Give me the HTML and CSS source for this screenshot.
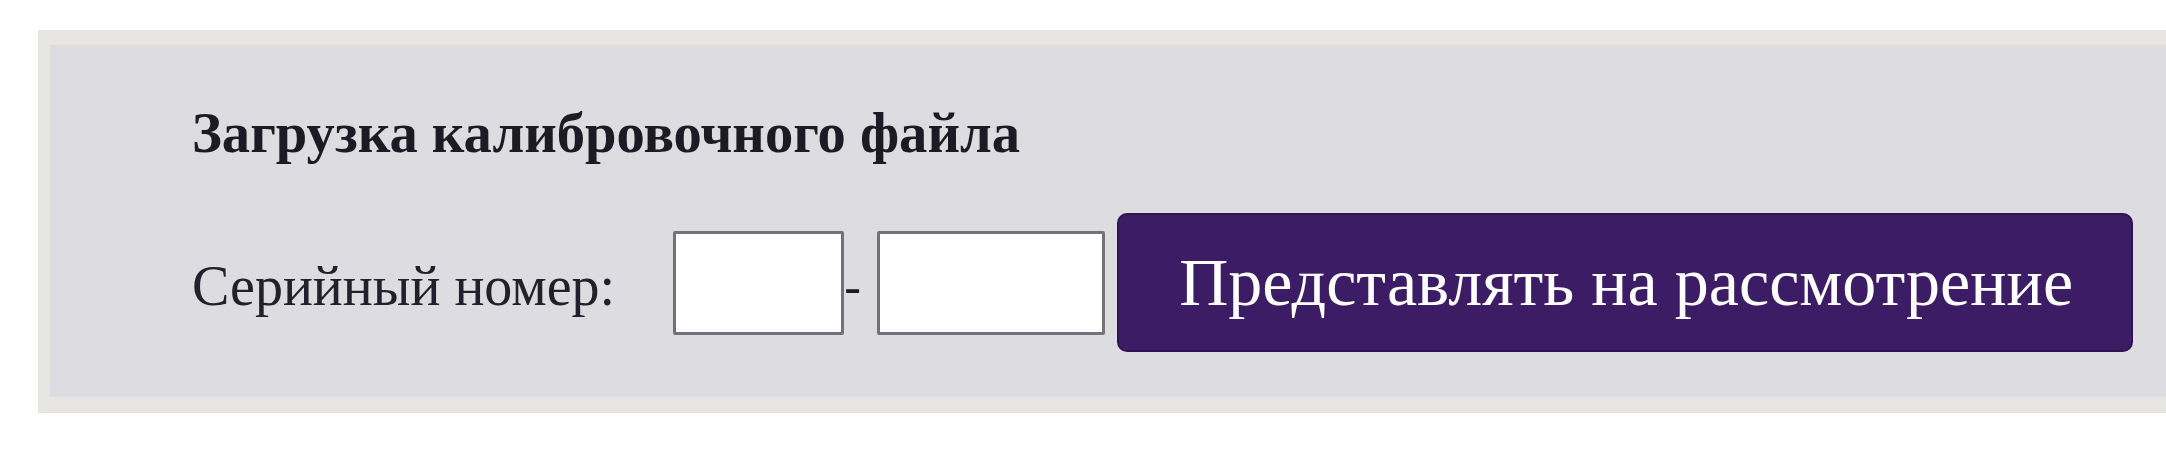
FILE: index.html
```html
<!DOCTYPE html>
<html lang="ru">
<head>
<meta charset="utf-8">
<title>Загрузка калибровочного файла</title>
<link rel="stylesheet" href="styles.css">
</head>
<body>
<div class="frame">
  <div class="panel">
    <h2 class="title">Загрузка калибровочного файла</h2>
    <form class="row">
      <label class="label" for="sn1">Серийный номер:</label>
      <input class="field field-a" id="sn1" type="text">
      <span class="dash">-</span>
      <input class="field field-b" id="sn2" type="text">
      <button class="submit" type="button">Представлять на рассмотрение</button>
    </form>
  </div>
</div>
</body>
</html>
```

FILE: styles.css
```css
html, body {
  margin: 0;
  padding: 0;
  background: #ffffff;
  overflow: hidden;
}

body {
  font-family: "Liberation Serif", "Times New Roman", serif;
  color: #1d1b26;
}

.frame {
  margin: 30px 0 0 38px;
  padding: 15px 0 16px 12px;
  background: #e7e6e3;
}

.panel {
  background: #dddce0;
  height: 352px;
  box-sizing: border-box;
  padding: 59px 0 0 142px;
}

.title {
  margin: 0;
  font-size: 56.6px;
  line-height: 58px;
  font-weight: bold;
  color: #1c1a24;
  white-space: nowrap;
}

.row {
  display: flex;
  align-items: center;
  margin: 51px 0 0 0;
}

.label {
  font-size: 56px;
  line-height: 62px;
  padding-top: 7px;
  color: #22202a;
  white-space: nowrap;
  margin-right: 58px;
}

.field {
  box-sizing: border-box;
  height: 104px;
  border: 3px solid #747278;
  border-radius: 2px;
  background: #ffffff;
  margin: 0;
  padding: 0;
}

.field-a {
  width: 171px;
}

.field-b {
  width: 228px;
}

.dash {
  font-size: 50px;
  line-height: 62px;
  padding-top: 7px;
  width: 33px;
  color: #1c1a24;
}

.submit {
  box-sizing: border-box;
  height: 139px;
  margin-left: 12px;
  padding: 0 58px 0 60px;
  display: flex;
  align-items: center;
  background: #3c1d65;
  border: 2px solid #2f1552;
  border-radius: 10px;
  color: #ffffff;
  font-family: "Liberation Serif", "Times New Roman", serif;
  font-size: 68px;
  line-height: 75px;
  white-space: nowrap;
}
```
